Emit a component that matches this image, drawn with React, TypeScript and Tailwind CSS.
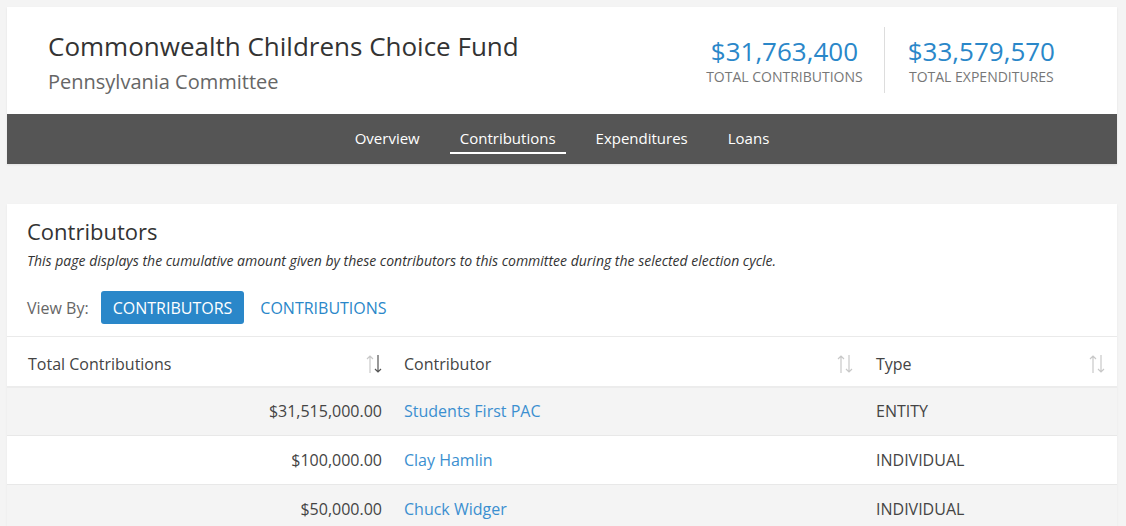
import React from 'react';

type SortState = 'desc' | 'none';

function SortIcon({ state }: { state: SortState }) {
  const up = '#c8c8c8';
  const down = state === 'desc' ? '#555555' : '#c8c8c8';
  return (
    <svg width="18" height="20" viewBox="0 0 18 20" fill="none" strokeWidth="1.2">
      <path d="M5 19V2M2 5l3-3 3 3" stroke={up} />
      <path d="M13 1v17M10 15l3 3 3-3" stroke={down} />
    </svg>
  );
}

const rows = [
  { amount: '$31,515,000.00', name: 'Students First PAC', type: 'ENTITY' },
  { amount: '$100,000.00', name: 'Clay Hamlin', type: 'INDIVIDUAL' },
  { amount: '$50,000.00', name: 'Chuck Widger', type: 'INDIVIDUAL' },
];

const navItems = ['Overview', 'Contributions', 'Expenditures', 'Loans'];

export default function App() {
  return (
    <div
      className="min-h-screen bg-[#f4f4f4] pl-[7px] pr-[9px] pt-[7px] text-[#333]"
      style={{ fontFamily: '"Open Sans", "Noto Sans", sans-serif' }}
    >
      {/* Header */}
      <div className="bg-white shadow-[0_1px_2px_rgba(0,0,0,0.08)]">
        <div className="flex h-[107px] justify-between pl-[41px] pr-[62px]">
          <div className="pt-[22px]">
            <h1 className="text-[26px] leading-[34px] text-[#333]">Commonwealth Childrens Choice Fund</h1>
            <p className="mt-[4px] text-[20px] leading-[30px] text-[#666]">Pennsylvania Committee</p>
          </div>
          <div className="mb-[2px] flex items-center">
            <div className="flex flex-col items-center pr-[21px]">
              <span className="text-[26px] leading-[34px] text-[#2a87c9]">$31,763,400</span>
              <span className="text-[14px] leading-[18px] text-[#777]">TOTAL CONTRIBUTIONS</span>
            </div>
            <div className="h-[66px] w-px bg-[#ddd]" />
            <div className="flex flex-col items-center pl-[23px]">
              <span className="text-[26px] leading-[34px] text-[#2a87c9]">$33,579,570</span>
              <span className="text-[14px] leading-[18px] text-[#777]">TOTAL EXPENDITURES</span>
            </div>
          </div>
        </div>
        <nav className="flex h-[50px] items-center justify-center gap-[20px] bg-[#555]">
          {navItems.map((item) => (
            <a
              key={item}
              className={
                'px-[10px] pb-[4px] pt-[4px] text-[15px] leading-[20px] text-white ' +
                (item === 'Contributions' ? 'border-b-2 border-white' : 'border-b-2 border-transparent')
              }
            >
              {item}
            </a>
          ))}
        </nav>
      </div>

      {/* Contributors card */}
      <div className="mt-[40px] bg-white shadow-[0_1px_2px_rgba(0,0,0,0.06)]">
        <div className="px-[20px] pt-[12px]">
          <h2 className="text-[22px] leading-[30px] text-[#333]">Contributors</h2>
          <p className="mt-[6px] text-[14px] italic leading-[18px] text-[#333]">
            This page displays the cumulative amount given by these contributors to this committee during the selected election cycle.
          </p>
          <div className="mt-[21px] flex items-center pb-[12px]">
            <span className="mr-[12px] text-[16px] text-[#666]">View By:</span>
            <button className="h-[33px] rounded-[3px] bg-[#2a87c9] px-[12px] text-[16px] text-white">CONTRIBUTORS</button>
            <button className="ml-[4px] h-[33px] px-[12px] text-[16px] text-[#2a87c9]">CONTRIBUTIONS</button>
          </div>
        </div>
        <table className="w-full border-collapse border-t border-[#eaeaea]">
          <thead>
            <tr className="h-[50px] border-b-2 border-[#ececec] text-[16px] text-[#444]">
              <th className="w-[386px] pb-[10px] pl-[21px] pr-[10px] text-left align-bottom font-normal">
                <div className="flex items-center justify-between">
                  <span>Total Contributions</span>
                  <SortIcon state="desc" />
                </div>
              </th>
              <th className="w-[471px] pb-[10px] pl-[11px] pr-[10px] text-left align-bottom font-normal">
                <div className="flex items-center justify-between">
                  <span>Contributor</span>
                  <SortIcon state="none" />
                </div>
              </th>
              <th className="pb-[10px] pl-[12px] pr-[11px] text-left align-bottom font-normal">
                <div className="flex items-center justify-between">
                  <span>Type</span>
                  <SortIcon state="none" />
                </div>
              </th>
            </tr>
          </thead>
          <tbody>
            {rows.map((r, i) => (
              <tr
                key={r.name}
                className={'h-[49px] border-b border-[#e8e8e8] text-[16px] ' + (i % 2 === 0 ? 'bg-[#f4f4f4]' : 'bg-white')}
              >
                <td className="pr-[11px] text-right text-[#444]">{r.amount}</td>
                <td className="pl-[11px] text-[#3b8fd0]">{r.name}</td>
                <td className="pl-[12px] text-[#444]">{r.type}</td>
              </tr>
            ))}
          </tbody>
        </table>
      </div>
    </div>
  );
}
